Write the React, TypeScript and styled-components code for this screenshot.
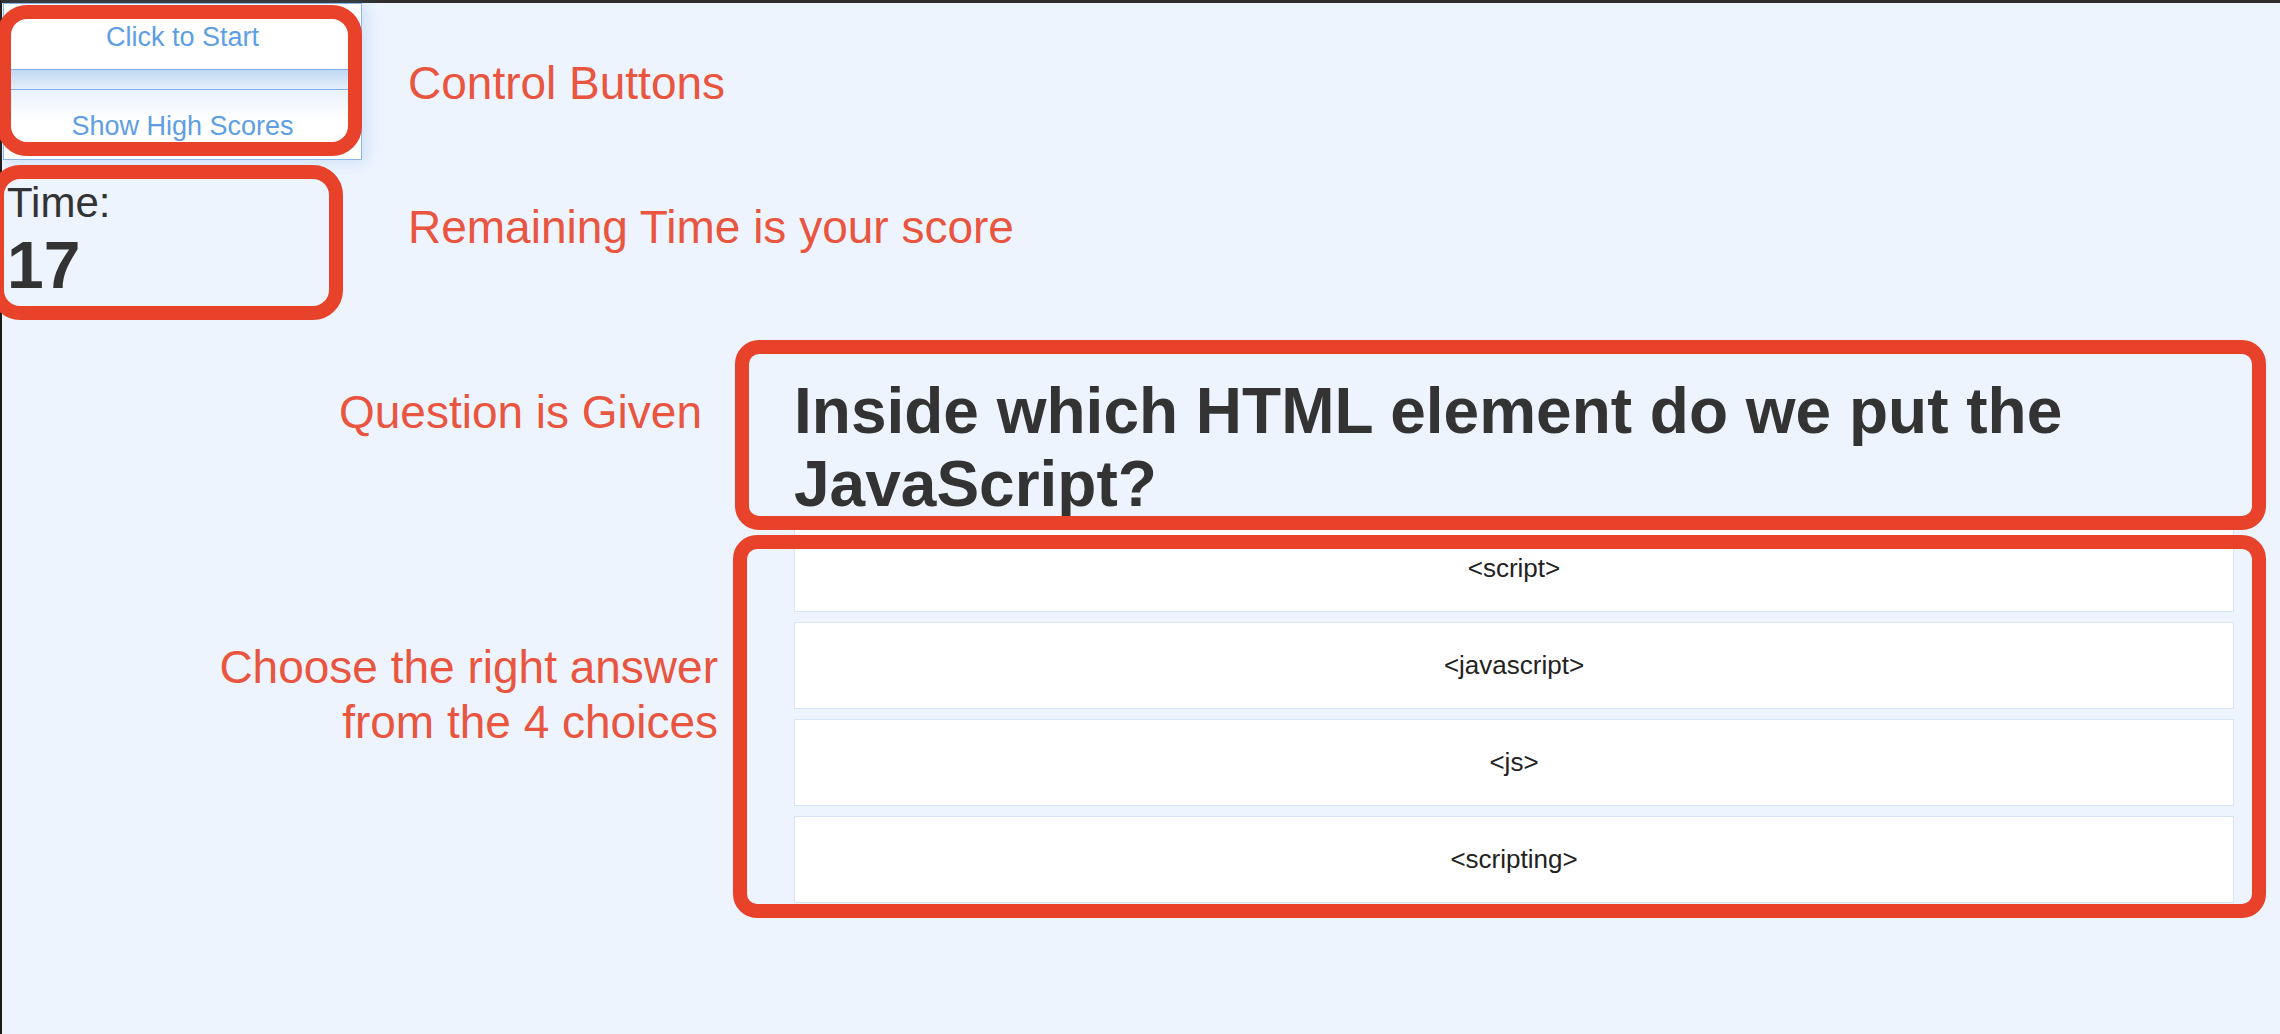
import React from "react";
import styled, { createGlobalStyle } from "styled-components";

const GlobalStyle = createGlobalStyle`
  html, body {
    margin: 0;
    padding: 0;
  }

  body {
    font-family: "Liberation Sans", Arial, Helvetica, sans-serif;
    background: #edf4fe;
  }
`;

const choices = ["<script>", "<javascript>", "<js>", "<scripting>"];

const App = () => {
  return (
    <>
      <GlobalStyle />
      <Page>
        <TopGrid>
          <Panel>
            <ControlButton>Click to Start</ControlButton>
            <Divider />
            <ControlButton $second>Show High Scores</ControlButton>
            <Callout $inset="1px -1px 3px -7px" $radius={30} />
          </Panel>
          <Note $top={53}>Control Buttons</Note>

          <Timer>
            <TimeLabel>Time:</TimeLabel>
            <TimeValue>17</TimeValue>
            <Callout $inset="-14px 21px -17px -12px" $radius={30} />
          </Timer>
          <Note $top={21}>Remaining Time is your score</Note>
        </TopGrid>

        <Quiz>
          <Note $top={10} $pad={20} $right>
            Question is Given
          </Note>
          <QuestionBlock>
            <Question>Inside which HTML element do we put the JavaScript?</Question>
            <Callout $inset="-35px -32px -9px -59px" $radius={24} />
          </QuestionBlock>

          <Note $top={115} $pad={4} $right>
            Choose the right answer
            <br />
            from the 4 choices
          </Note>
          <Answers>
            {choices.map((choice) => (
              <Answer key={choice}>{choice}</Answer>
            ))}
            <Callout $inset="10px -32px -15px -61px" $radius={24} />
          </Answers>
        </Quiz>
      </Page>
    </>
  );
};

const Page = styled.div`
  min-height: 100vh;
  box-sizing: border-box;
  border-top: 3px solid #2e2e2e;
  border-left: 2px solid #1e1a16;
  background: #edf4fe;
`;

const TopGrid = styled.div`
  display: grid;
  grid-template-columns: 362px auto;
  column-gap: 44px;
  row-gap: 19px;
  align-items: start;
`;

const Panel = styled.div`
  position: relative;
  margin-left: 1px;
  width: 359px;
  box-sizing: border-box;
  border: 1px solid #8ab6ea;
  background: #fff;
  box-shadow: 4px 2px 14px rgba(140, 185, 235, 0.35);
`;

const ControlButton = styled.div<{ $second?: boolean }>`
  display: flex;
  align-items: center;
  justify-content: center;
  height: ${(p) => (p.$second ? 69 : 65)}px;
  padding-top: ${(p) => (p.$second ? 3 : 0)}px;
  box-sizing: border-box;
  font-size: 27px;
  line-height: 32px;
  color: #5e9ee4;
  background: ${(p) =>
    p.$second ? "linear-gradient(#eaf2fc, #ffffff 45%)" : "#ffffff"};
`;

const Divider = styled.div`
  height: 19px;
  border-top: 1px solid #7fb0e8;
  border-bottom: 1px solid #7fb0e8;
  background: linear-gradient(#bfd8f3, #e6f0fb);
`;

const Note = styled.div<{ $top: number; $pad?: number; $right?: boolean }>`
  margin-top: ${(p) => p.$top}px;
  padding-right: ${(p) => p.$pad || 0}px;
  text-align: ${(p) => (p.$right ? "right" : "left")};
  font-size: 46px;
  line-height: 55px;
  color: #e9553f;
  white-space: nowrap;
`;

const Timer = styled.div`
  position: relative;
  padding-left: 5px;
  color: #333;
`;

const TimeLabel = styled.div`
  font-size: 42px;
  line-height: 48px;
`;

const TimeValue = styled.div`
  font-size: 66px;
  line-height: 76px;
  font-weight: bold;
`;

const Quiz = styled.div`
  display: grid;
  grid-template-columns: 720px 1440px;
  column-gap: 72px;
  row-gap: 4px;
  margin-top: 72px;
  align-items: start;
`;

const QuestionBlock = styled.div`
  position: relative;
`;

const Question = styled.h2`
  margin: 0;
  font-size: 64px;
  line-height: 73px;
  font-weight: bold;
  color: #333;
`;

const Answers = styled.div`
  position: relative;
  display: flex;
  flex-direction: column;
  gap: 10px;
`;

const Answer = styled.div`
  display: flex;
  align-items: center;
  justify-content: center;
  height: 87px;
  box-sizing: border-box;
  border: 1px solid #d6e5f7;
  background: #fff;
  font-size: 26px;
  color: #222;

  &:first-child {
    border-top-color: #edf4fe;
  }
`;

const Callout = styled.div<{ $inset: string; $radius: number }>`
  position: absolute;
  z-index: 1;
  inset: ${(p) => p.$inset};
  border: 14px solid #e8432a;
  border-radius: ${(p) => p.$radius}px;
  pointer-events: none;
`;

export default App;
